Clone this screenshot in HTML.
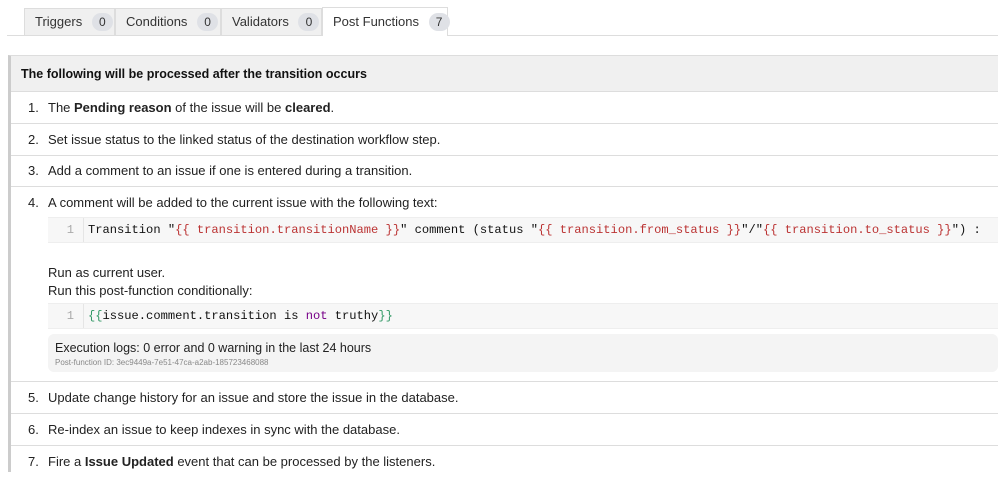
<!DOCTYPE html>
<html><head><style>
*{box-sizing:border-box;margin:0;padding:0}
body{width:998px;height:472px;overflow:hidden;background:#fff;font-family:"Liberation Sans",sans-serif;font-size:13px;color:#172b4d;position:relative}
.tabline{position:absolute;left:7px;right:0;top:35px;border-top:1px solid #ddd}
.tab{position:absolute;top:8px;height:27px;background:#f0f0f0;border:1px solid #ddd;border-bottom:none;color:#333;font-size:13px;line-height:26px;padding-left:10px;white-space:nowrap}
.tab.act{background:#fff;top:7px;height:29px;line-height:28px}
.b{display:inline-block;background:#dfe1e6;border-radius:9px;width:21px;height:18px;line-height:18px;text-align:center;margin-left:6px;font-size:12px;color:#333}
.box{position:absolute;left:8px;top:55px;right:0;bottom:0;border-left:3px solid #ccc;border-top:1px solid #ddd}
.hdr{height:36px;background:#f0f0f0;border-bottom:1px solid #ddd;font-weight:bold;font-size:12.5px;line-height:36px;padding-left:10px;color:#111}
.row{position:absolute;left:0;right:0;border-bottom:1px solid #ddd;color:#222}
.n{position:absolute;left:17px}
.t{position:absolute;left:37px;white-space:nowrap}
.code{position:absolute;left:37px;right:0;height:26px;background:#f7f7f7;border-top:1px solid #eee;border-bottom:1px solid #eee;font-family:"Liberation Mono",monospace;font-size:12.1px;line-height:25px;white-space:pre;color:#111;overflow:hidden}
.ln{display:inline-block;width:36px;text-align:right;padding-right:9px;color:#aaa;border-right:1px solid #e5e5e5;margin-right:4px}
.r{color:#b33}.p{color:#708}.g{color:#396}
.logs{position:absolute;left:37px;right:0;height:38px;background:#f4f4f4;border-radius:6px;padding:7px 0 0 7px;font-size:12.5px;color:#222}
.logs small{display:block;font-size:8px;color:#888;margin-top:3px}
</style></head><body>
<div class="tabline"></div>
<div class="tab" style="left:24px;width:91px">Triggers <span class="b">0</span></div>
<div class="tab" style="left:115px;width:106px">Conditions <span class="b">0</span></div>
<div class="tab" style="left:221px;width:101px">Validators <span class="b">0</span></div>
<div class="tab act" style="left:322px;width:126px">Post Functions <span class="b">7</span></div>
<div class="box">
<div class="hdr">The following will be processed after the transition occurs</div>
<div class="row" style="top:36px;height:32px;line-height:31px"><span class="n">1.</span><span class="t">The <b>Pending reason</b> of the issue will be <b>cleared</b>.</span></div>
<div class="row" style="top:68px;height:32px;line-height:31px"><span class="n">2.</span><span class="t">Set issue status to the linked status of the destination workflow step.</span></div>
<div class="row" style="top:100px;height:31px;line-height:30px"><span class="n">3.</span><span class="t">Add a comment to an issue if one is entered during a transition.</span></div>
<div class="row" style="top:131px;height:195px">
<span class="n" style="top:8px">4.</span><span class="t" style="top:8px">A comment will be added to the current issue with the following text:</span>
<div class="code" style="top:30px"><span class="ln">1</span>Transition "<span class="r">{{ transition.transitionName }}</span>" comment (status "<span class="r">{{ transition.from_status }}</span>"/"<span class="r">{{ transition.to_status }}</span>") :</div>
<span class="t" style="top:78px">Run as current user.</span>
<span class="t" style="top:96px">Run this post-function conditionally:</span>
<div class="code" style="top:116px"><span class="ln">1</span><span class="g">{{</span>issue.comment.transition is <span class="p">not</span> truthy<span class="g">}}</span></div>
<div class="logs" style="top:147px">Execution logs: 0 error and 0 warning in the last 24 hours<small>Post-function ID: 3ec9449a-7e51-47ca-a2ab-185723468088</small></div>
</div>
<div class="row" style="top:326px;height:32px;line-height:31px"><span class="n">5.</span><span class="t">Update change history for an issue and store the issue in the database.</span></div>
<div class="row" style="top:358px;height:32px;line-height:31px"><span class="n">6.</span><span class="t">Re-index an issue to keep indexes in sync with the database.</span></div>
<div class="row" style="top:390px;height:32px;line-height:31px;border:none"><span class="n">7.</span><span class="t">Fire a <b>Issue Updated</b> event that can be processed by the listeners.</span></div>
</div>
</body></html>
